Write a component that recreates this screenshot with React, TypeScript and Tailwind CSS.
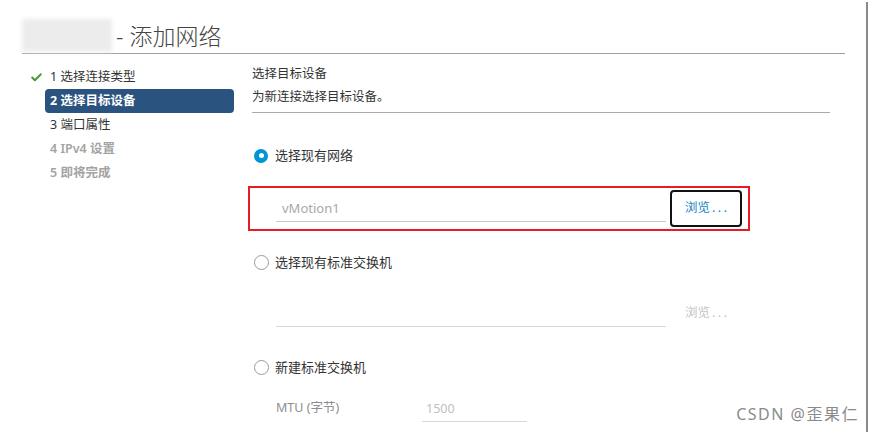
import { Check } from "lucide-react";

const font = { fontFamily: '"Noto Sans", "Noto Sans CJK SC", sans-serif' };

const steps = [
  { label: "1 选择连接类型", state: "done" },
  { label: "2 选择目标设备", state: "active" },
  { label: "3 端口属性", state: "todo" },
  { label: "4 IPv4 设置", state: "disabled" },
  { label: "5 即将完成", state: "disabled" },
];

function Radio({ checked }: { checked?: boolean }) {
  return checked ? (
    <span className="flex h-[14px] w-[14px] items-center justify-center rounded-full bg-[#0095d3]">
      <span className="h-[5px] w-[5px] rounded-full bg-white" />
    </span>
  ) : (
    <span className="h-[15px] w-[15px] rounded-full border border-[#9a9a9a] bg-white" />
  );
}

function Browse() {
  return (
    <>
      浏览<span className="ml-[2px] tracking-[2.5px]">...</span>
    </>
  );
}

export default function App() {
  return (
    <div className="relative h-[432px] w-[870px] overflow-hidden bg-white text-[#333]" style={font}>
      <div className="absolute right-[2px] top-[2px] bottom-0 w-[2px] bg-[#8a8a8a]" />

      <header className="flex items-end pl-[22px] pr-[25px] pt-[19px]">
        <div className="flex w-full items-center border-b border-[#a0a0a0] pb-[1px]">
          <div className="h-[33px] w-[90px] bg-[#ececec] blur-[2px]" />
          <h1 className="ml-[4px] text-[23px] font-light leading-[32px] text-[#444]">- 添加网络</h1>
        </div>
      </header>

      <div className="flex pt-[11px]">
        <nav className="w-[252px] shrink-0 pl-[45px] pr-[18px]">
          {steps.map((s) => (
            <div
              key={s.label}
              className={
                "relative flex h-6 items-center px-[5px] text-[12.5px] " +
                (s.state === "active"
                  ? "rounded-[4px] bg-[#2b5380] font-bold text-white"
                  : s.state === "disabled"
                  ? "font-semibold text-[#a3a3a3]"
                  : "text-[#333]")
              }
            >
              {s.state === "done" && (
                <Check className="absolute left-[-15px] h-[13px] w-[13px] text-[#3f9a2f]" strokeWidth={3.5} />
              )}
              {s.label}
            </div>
          ))}
        </nav>

        <main className="w-[578px]">
          <div className="border-b border-[#aaa] pb-[6px]">
            <div className="text-[12.5px] leading-[18px]">选择目标设备</div>
            <div className="mt-[5px] text-[12.5px] leading-[18px]">为新连接选择目标设备。</div>
          </div>

          <div className="mt-[33px] flex items-center gap-[7px] pl-[2px] text-[13px]">
            <Radio checked />
            <span>选择现有网络</span>
          </div>

          <div className="ml-[-4px] mt-[20px] flex h-[45px] w-[502px] items-center border-2 border-[#e51c23] pl-[26px]">
            <div className="h-[27px] w-[390px] border-b border-[#c8c8c8] pl-[6px] text-[13px] leading-[26px] text-[#a8a8a8]">
              vMotion1
            </div>
            <button className="ml-[4px] h-[37px] w-[72px] rounded-[4px] border-2 border-[#111] pl-[13px] text-left text-[12.5px] text-[#1a7fc0]">
              <Browse />
            </button>
          </div>

          <div className="mt-[22px] flex items-center gap-[6px] pl-[2px] text-[13px]">
            <Radio />
            <span>选择现有标准交换机</span>
          </div>

          <div className="mt-[28px] flex items-end pl-[24px]">
            <div className="h-[27px] w-[390px] border-b border-[#d8d8d8]" />
            <span className="mb-[4px] ml-[19px] text-[12.5px] text-[#c4c4c4]">
              <Browse />
            </span>
          </div>

          <div className="mt-[31px] flex items-center gap-[6px] pl-[2px] text-[13px]">
            <Radio />
            <span>新建标准交换机</span>
          </div>

          <div className="mt-[20px] flex items-end pl-[24px] text-[12.5px]">
            <span className="mb-[4px] w-[146px] text-[#8e8e8e]">MTU (字节)</span>
            <div className="h-[24px] w-[105px] border-b border-[#d8d8d8] pl-[4px] leading-[22px] text-[#c0c0c0]">1500</div>
          </div>
        </main>
      </div>

      <div className="absolute bottom-[6px] right-[11px] whitespace-nowrap text-[16px] tracking-[1.5px] text-[#8a8a8a]">CSDN @歪果仁</div>
    </div>
  );
}
